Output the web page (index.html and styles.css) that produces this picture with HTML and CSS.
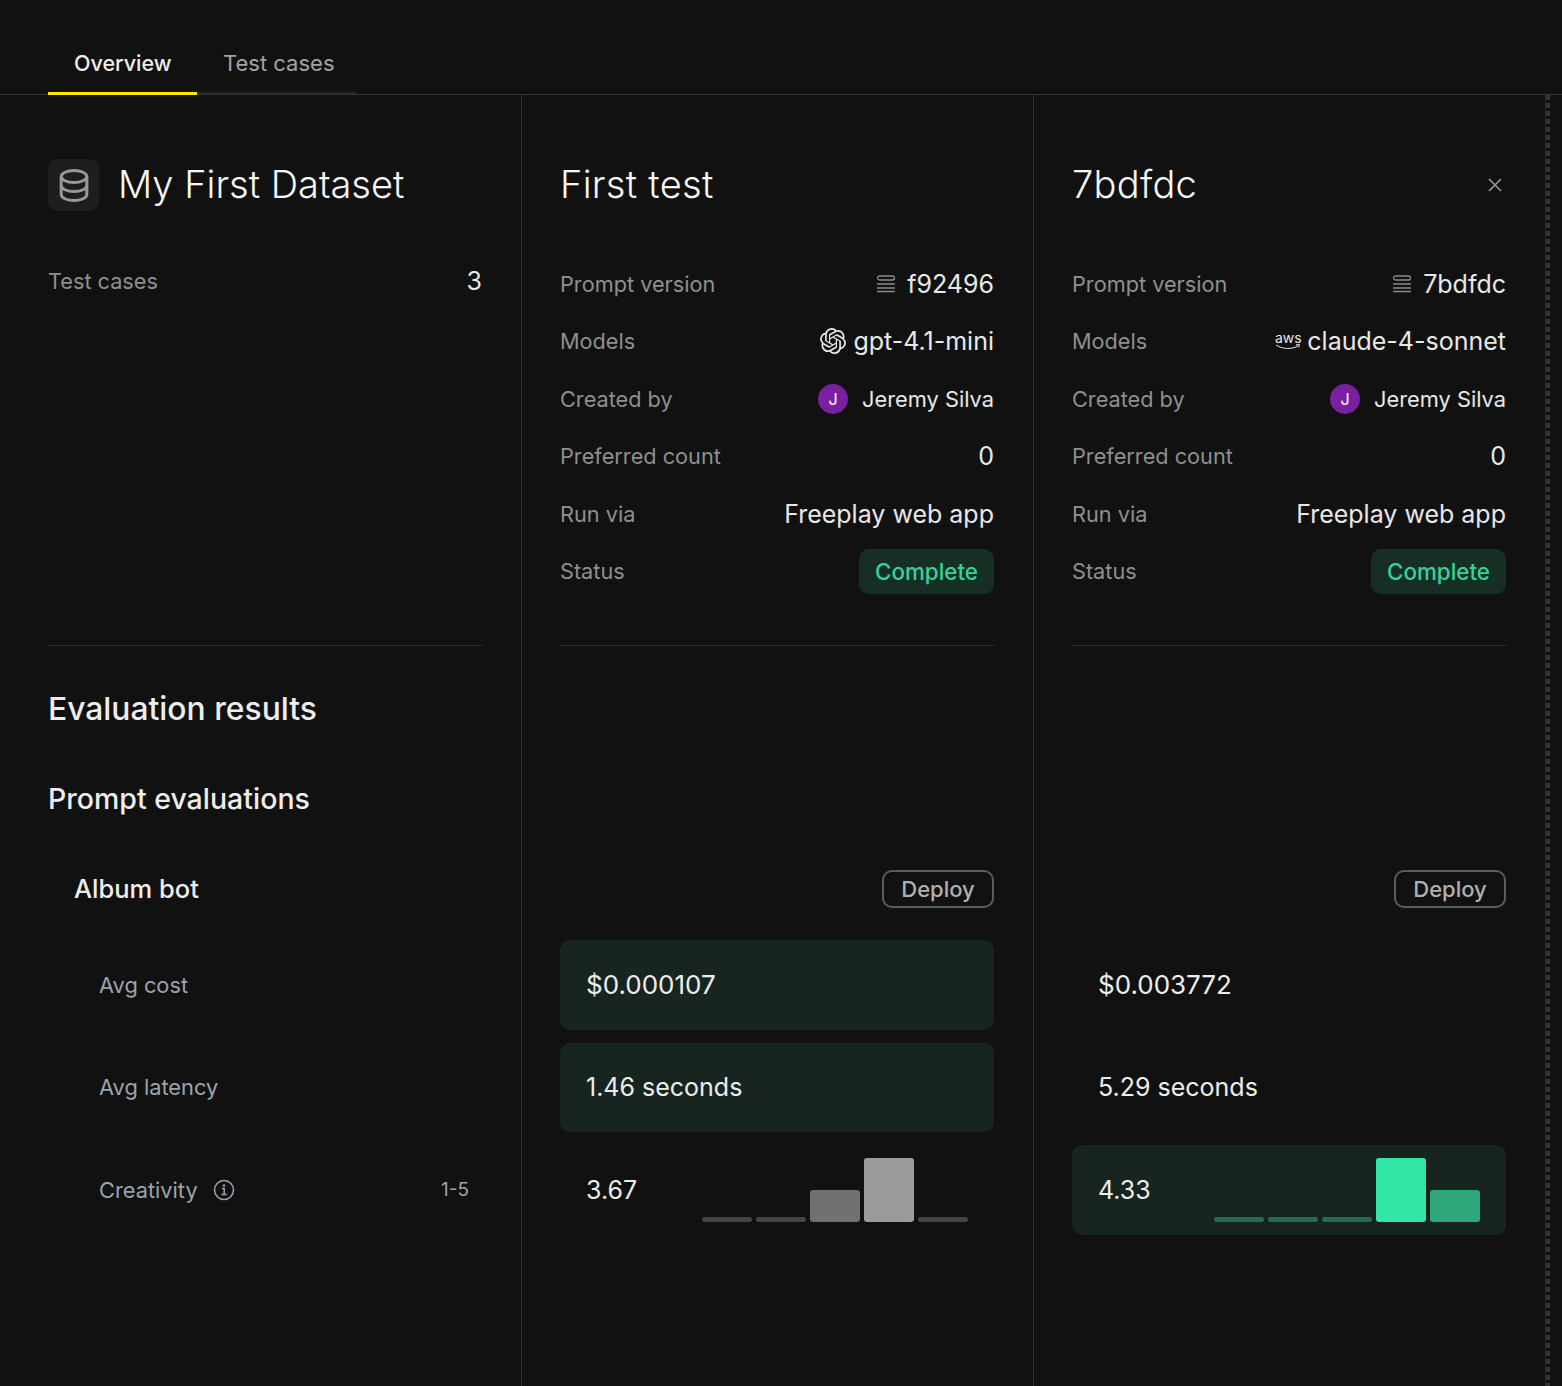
FILE: index.html
```html
<!DOCTYPE html>
<html lang="en">
<head>
<meta charset="utf-8">
<title>My First Dataset</title>
<link rel="stylesheet" href="styles.css">
</head>
<body>
<nav class="tabs">
  <a class="tab tab-active">Overview</a>
  <a class="tab">Test cases</a>
</nav>
<main class="board">
  <section class="col col-first">
    <header class="col-head">
      <span class="ds-icon">
        <svg width="30" height="33" viewBox="0 0 30 33" fill="none" stroke="#999" stroke-width="3"><ellipse cx="15" cy="7.500" rx="12.800" ry="6"/><path d="M2.200 7.500v18c0 3.300 5.700 6 12.800 6s12.800-2.700 12.800-6v-18"/><path d="M2.200 16.500c0 3.300 5.700 6 12.800 6s12.800-2.700 12.800-6"/></svg>
      </span>
      <h1 class="title">My First Dataset</h1>
    </header>
    <div class="info">
      <div class="row row-first"><span class="label">Test cases</span><span class="value">3</span></div>
    </div>
    <hr class="rule">
    <h2 class="h-eval">Evaluation results</h2>
    <h3 class="h-prompt">Prompt evaluations</h3>
    <h4 class="h-album">Album bot</h4>
    <div class="metrics">
      <div class="metric metric-label">Avg cost</div>
      <div class="metric metric-label">Avg latency</div>
      <div class="metric metric-label metric-creativity">
        <span class="creativity-name">Creativity
          <svg class="info-icon" width="22" height="22" viewBox="0 0 22 22" fill="none" stroke="#9aa3af" stroke-width="1.500"><circle cx="11" cy="11" r="9.500"/><path d="M9 9.500h2.200V15.500M8.500 15.500h5.200"/><circle cx="11" cy="6.500" r=".6"/></svg>
        </span>
        <span class="range">1-5</span>
      </div>
    </div>
  </section>

  <section class="col">
    <header class="col-head"><h1 class="title">First test</h1></header>
    <div class="info">
      <div class="row"><span class="label">Prompt version</span><span class="value"><svg class="stack" width="20" height="18" viewBox="0 0 20 18" fill="none" stroke="#8a8a8a" stroke-width="1.300"><rect x="1.500" y="1" width="17" height="4" rx="2"/><path d="M1 9h18M1 13h18M1 16.500h18"/></svg>f92496</span></div>
      <div class="row"><span class="label">Models</span><span class="value"><svg class="brand" width="26" height="26" viewBox="0 0 24 24" fill="#e6e6e6"><path d="M22.2819 9.8211a5.9847 5.9847 0 0 0-.5157-4.9108 6.0462 6.0462 0 0 0-6.5098-2.9A6.0651 6.0651 0 0 0 4.9807 4.1818a5.9847 5.9847 0 0 0-3.9977 2.9 6.0462 6.0462 0 0 0 .7427 7.0966 5.98 5.98 0 0 0 .511 4.9107 6.051 6.051 0 0 0 6.5146 2.9001A5.9847 5.9847 0 0 0 13.2599 24a6.0557 6.0557 0 0 0 5.7718-4.2058 5.9894 5.9894 0 0 0 3.9977-2.9001 6.0557 6.0557 0 0 0-.7475-7.0729zm-9.022 12.6081a4.4755 4.4755 0 0 1-2.8764-1.0408l.1419-.0804 4.7783-2.7582a.7948.7948 0 0 0 .3927-.6813v-6.7369l2.02 1.1686a.071.071 0 0 1 .038.052v5.5826a4.504 4.504 0 0 1-4.4945 4.4944zm-9.6607-4.1254a4.4708 4.4708 0 0 1-.5346-3.0137l.142.0852 4.783 2.7582a.7712.7712 0 0 0 .7806 0l5.8428-3.3685v2.3324a.0804.0804 0 0 1-.0332.0615L9.74 19.9502a4.4992 4.4992 0 0 1-6.1408-1.6464zM2.3408 7.8956a4.485 4.485 0 0 1 2.3655-1.9728V11.6a.7664.7664 0 0 0 .3879.6765l5.8144 3.3543-2.0201 1.1685a.0757.0757 0 0 1-.071 0l-4.8303-2.7865A4.504 4.504 0 0 1 2.3408 7.872zm16.5963 3.8558L13.1038 8.364 15.1192 7.2a.0757.0757 0 0 1 .071 0l4.8303 2.7913a4.4944 4.4944 0 0 1-.6765 8.1042v-5.6772a.79.79 0 0 0-.407-.667zm2.0107-3.0231l-.142-.0852-4.7735-2.7818a.7759.7759 0 0 0-.7854 0L9.409 9.2297V6.8974a.0662.0662 0 0 1 .0284-.0615l4.8303-2.7866a4.4992 4.4992 0 0 1 6.6802 4.66zM8.3065 12.863l-2.02-1.1638a.0804.0804 0 0 1-.038-.0567V6.0742a4.4992 4.4992 0 0 1 7.3757-3.4537l-.142.0805L8.704 5.459a.7948.7948 0 0 0-.3927.6813zm1.0976-2.3654l2.602-1.4998 2.6069 1.4998v2.9994l-2.5974 1.4997-2.6067-1.4997Z"/></svg>gpt-4.1-mini</span></div>
      <div class="row"><span class="label">Created by</span><span class="value value-user"><span class="avatar">J</span>Jeremy Silva</span></div>
      <div class="row"><span class="label">Preferred count</span><span class="value">0</span></div>
      <div class="row"><span class="label">Run via</span><span class="value">Freeplay web app</span></div>
      <div class="row"><span class="label">Status</span><span class="badge">Complete</span></div>
    </div>
    <hr class="rule">
    <div class="deploy-row"><button class="deploy">Deploy</button></div>
    <div class="metrics">
      <div class="metric metric-best metric-money">$0.000107</div>
      <div class="metric metric-best">1.46 seconds</div>
      <div class="metric">3.67
        <div class="chart">
          <i class="bar bar-min grey-low"></i><i class="bar bar-min grey-low"></i><i class="bar bar-mid grey-mid"></i><i class="bar bar-max grey-high"></i><i class="bar bar-min grey-low"></i>
        </div>
      </div>
    </div>
  </section>

  <section class="col">
    <header class="col-head"><h1 class="title">7bdfdc</h1>
      <svg class="close" width="16" height="16" viewBox="0 0 16 16" fill="none" stroke="#9a9a9a" stroke-width="1.600"><path d="M2 2l12 12M14 2L2 14"/></svg>
    </header>
    <div class="info">
      <div class="row"><span class="label">Prompt version</span><span class="value"><svg class="stack" width="20" height="18" viewBox="0 0 20 18" fill="none" stroke="#8a8a8a" stroke-width="1.300"><rect x="1.500" y="1" width="17" height="4" rx="2"/><path d="M1 9h18M1 13h18M1 16.500h18"/></svg>7bdfdc</span></div>
      <div class="row"><span class="label">Models</span><span class="value"><span class="aws"><span class="aws-text">aws</span><svg class="aws-smile" width="26" height="6" viewBox="0 0 26 6" fill="none" stroke="#e6e6e6" stroke-width="1"><path d="M1 1c7 4.500 16 4.500 22 .8M21 .8l3.500-.3-.8 3"/></svg></span>claude-4-sonnet</span></div>
      <div class="row"><span class="label">Created by</span><span class="value value-user"><span class="avatar">J</span>Jeremy Silva</span></div>
      <div class="row"><span class="label">Preferred count</span><span class="value">0</span></div>
      <div class="row"><span class="label">Run via</span><span class="value">Freeplay web app</span></div>
      <div class="row"><span class="label">Status</span><span class="badge">Complete</span></div>
    </div>
    <hr class="rule">
    <div class="deploy-row"><button class="deploy">Deploy</button></div>
    <div class="metrics">
      <div class="metric metric-money">$0.003772</div>
      <div class="metric">5.29 seconds</div>
      <div class="metric metric-best">4.33
        <div class="chart">
          <i class="bar bar-min green-low"></i><i class="bar bar-min green-low"></i><i class="bar bar-min green-low"></i><i class="bar bar-max green-high"></i><i class="bar bar-mid green-mid"></i>
        </div>
      </div>
    </div>
  </section>
  <div class="handle"></div>
</main>
</body>
</html>
```

FILE: styles.css
```css
* { box-sizing: border-box; }
html, body { margin: 0; height: 100%; }
body {
  background: #111111;
  color: #ededed;
  font-family: Inter, "Liberation Sans", sans-serif;
  overflow: hidden;
}
.tabs {
  display: flex;
  height: 95px;
  padding: 32px 0 0 48px;
  border-bottom: 1px solid #333333;
}
.tab {
  height: 62px;
  padding: 0 21px 0 26px;
  border-bottom: 2px solid #262626;
  font-size: 22px;
  line-height: 62px;
  color: #a3a3a0;
}
.tab-active {
  height: 63px;
  width: 149px;
  padding: 0 0 0 26px;
  color: #ededed;
  font-size: 21.500px;
  font-weight: 500;
  border-bottom: 3px solid #ffe600;
}
.board {
  display: flex;
  height: 1291px;
  padding-left: 48px;
}
.col {
  width: 512px;
  padding: 64px 39px 0 38px;
  border-left: 1px solid #2c2c2c;
}
.col-first {
  width: 473px;
  padding-left: 0;
  border-left: 0;
}
.handle {
  width: 5px;
  height: 100%;
  border-left: 1px solid #2c2c2c;
  background: repeating-linear-gradient(to bottom, #333333 0 5px, transparent 5px 8px);
}
.col-head {
  display: flex;
  align-items: center;
  height: 52px;
}
.ds-icon {
  display: flex;
  align-items: center;
  justify-content: center;
  width: 51px;
  height: 52px;
  margin-right: 20px;
  border-radius: 10px;
  background: #1e1e1e;
}
.title {
  margin: 0;
  flex: 1;
  padding-bottom: 2px;
  font-size: 38px;
  font-weight: 300;
  letter-spacing: .3px;
  color: #f7f7f7;
}
.col-first .title { letter-spacing: 0; margin-left: -1px; }
.close { margin-right: 3px; }
.info {
  height: 345px;
  margin-top: 44px;
}
.row {
  display: flex;
  align-items: center;
  justify-content: space-between;
  height: 57.500px;
}
.row-first { height: 52px; }
.label {
  font-size: 21.700px;
  color: #8f8f8f;
}
.value {
  display: flex;
  align-items: center;
  font-size: 25px;
  color: #e8e8e8;
}
.value-user { font-size: 21.800px; }
.stack { margin-right: 11px; }
.brand { margin-right: 7px; }
.aws {
  display: flex;
  flex-direction: column;
  align-items: center;
  width: 26px;
  margin-right: 6px;
}
.aws-text {
  font-size: 14px;
  line-height: 12px;
  color: #e6e6e6;
}
.aws-smile { display: block; }
.avatar {
  display: flex;
  align-items: center;
  justify-content: center;
  width: 30px;
  height: 30px;
  margin-right: 14px;
  border-radius: 50%;
  background: #7b1fa2;
  font-size: 16px;
  font-weight: 500;
}
.badge {
  padding: 0 16px;
  height: 45px;
  line-height: 45px;
  border-radius: 10px;
  background: #172e24;
  color: #34d399;
  font-size: 22.400px;
  font-weight: 500;
}
.rule {
  height: 1px;
  margin: 45px 0 0;
  border: 0;
  background: #2c2c2c;
}
.h-eval, .h-prompt, .h-album {
  display: flex;
  align-items: center;
  height: 90px;
  margin: 0;
  padding-bottom: 2px;
  font-weight: 500;
}
.h-eval { margin-top: 18px; font-size: 31.800px; }
.h-prompt { font-size: 28.500px; }
.h-album { padding-left: 26px; font-size: 25.500px; }
.deploy-row {
  display: flex;
  align-items: center;
  justify-content: flex-end;
  height: 288px;
  padding-top: 198px;
}
.deploy {
  width: 112px;
  height: 38px;
  border: 2px solid #5c5c5a;
  border-radius: 10px;
  background: transparent;
  color: #b0b0ac;
  font-family: inherit;
  font-size: 22px;
  font-weight: 500;
}
.metrics {
  display: flex;
  flex-direction: column;
  gap: 13px;
  margin-top: 6px;
}
.metric {
  display: flex;
  align-items: center;
  justify-content: space-between;
  height: 89.500px;
  padding: 0 26px;
  border-radius: 10px;
  font-size: 25px;
  color: #ededed;
}
.metric-money { font-size: 26px; }
.metric-best { background: #18241f; }
.metric-label {
  padding: 0 13px 0 51px;
  font-size: 21.800px;
  color: #9aa3af;
}
.creativity-name {
  display: flex;
  align-items: center;
  gap: 15px;
}
.range { font-size: 19px; }
.chart {
  display: flex;
  align-items: flex-end;
  gap: 4px;
  height: 64px;
}
.bar {
  display: block;
  width: 50px;
  border-radius: 3px;
}
.bar-min { height: 5px; }
.bar-mid { height: 32px; }
.bar-max { height: 64px; }
.grey-low { background: #444444; }
.grey-mid { background: #707070; }
.grey-high { background: #9b9b9b; }
.green-low { background: #2a6a50; }
.green-mid { background: #2ca87a; }
.green-high { background: #32e6a6; }
```
